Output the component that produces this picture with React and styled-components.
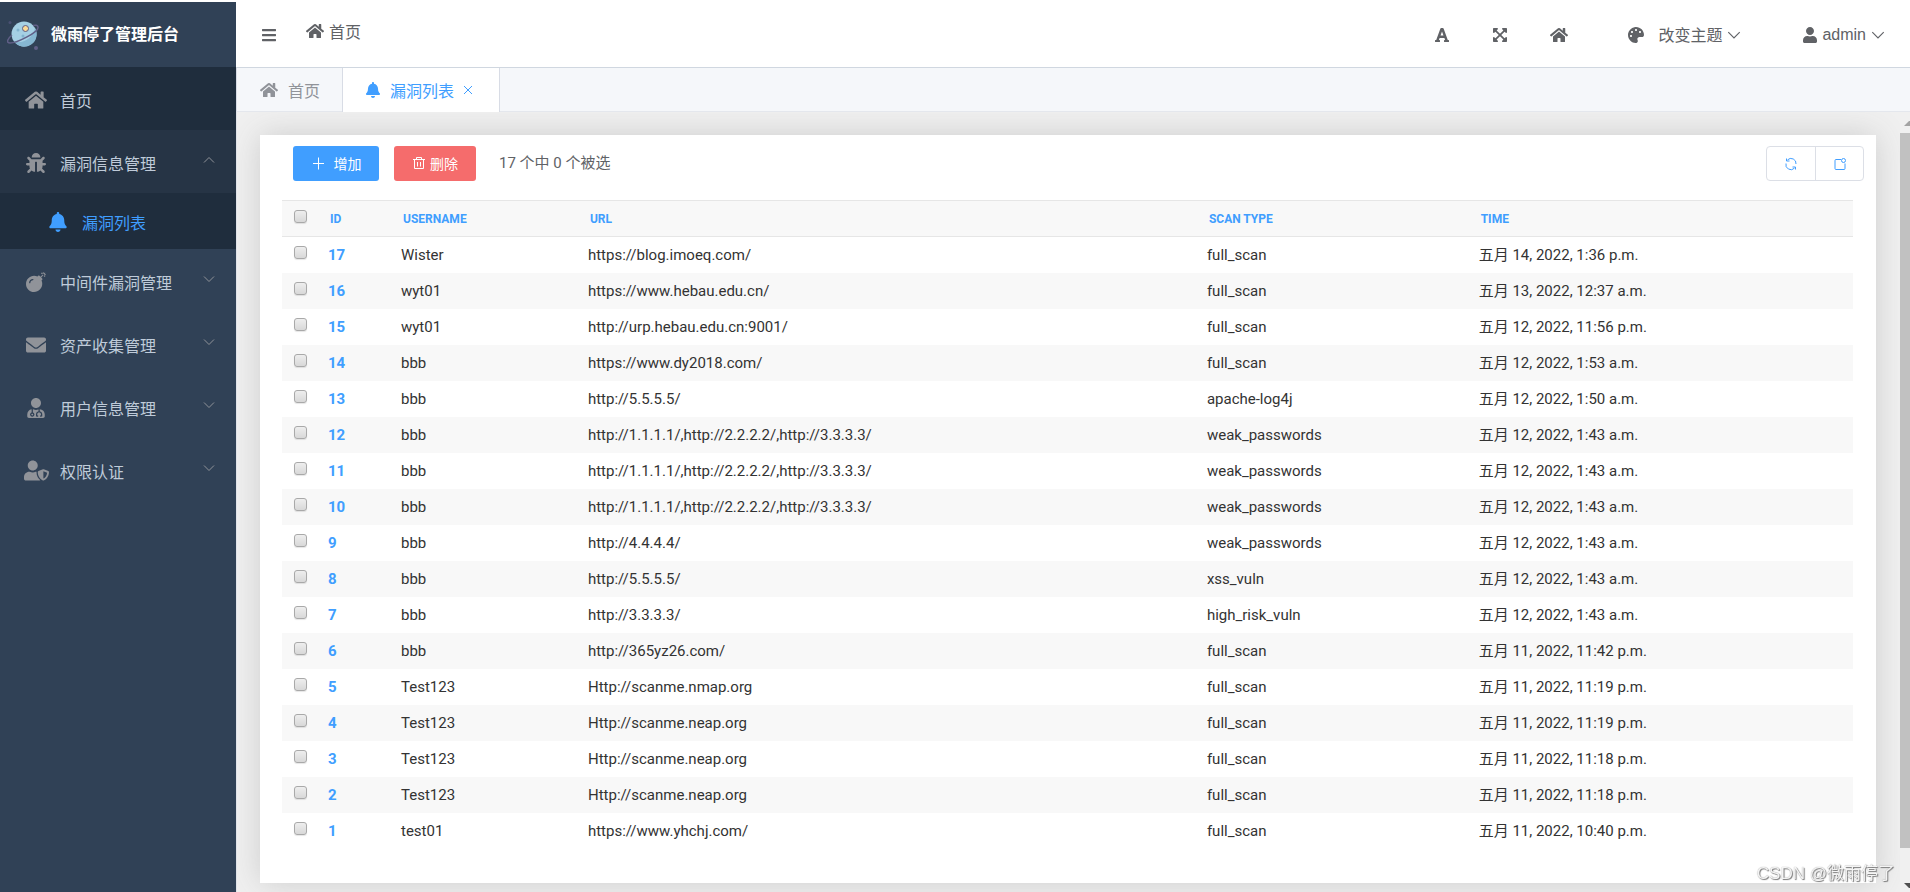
import React from 'react';
import styled, { createGlobalStyle, css } from 'styled-components';
import {
  FaBars,
  FaBell,
  FaBomb,
  FaBug,
  FaEnvelope,
  FaExpandArrowsAlt,
  FaFont,
  FaHome,
  FaPalette,
  FaUser,
  FaUserMd,
  FaUserShield,
} from 'react-icons/fa';

const GlobalStyle = createGlobalStyle`
  * {
    box-sizing: border-box;
  }
  body {
    margin: 0;
    background: #fff;
    color: #606266;
    font-family: 'Liberation Sans', 'Noto Sans CJK SC', sans-serif;
    font-size: 16px;
  }
  button {
    font-family: inherit;
    cursor: pointer;
  }
  a {
    color: inherit;
    text-decoration: none;
  }
`;

// layout
const Page = styled.div`
  display: flex;
  height: 100vh;
  padding-top: 2px;
  overflow: hidden;
`;

const Sidebar = styled.aside`
  flex: 0 0 236px;
  background: #304156;
`;

const Main = styled.div`
  flex: 1;
  min-width: 0;
  display: flex;
  flex-direction: column;
`;

// sidebar
const Brand = styled.a`
  display: flex;
  align-items: center;
  gap: 10px;
  height: 65px;
  padding: 0 0 3px 7px;
  color: #fff;
  font-weight: bold;
`;

const MenuItem = styled.a`
  display: flex;
  align-items: center;
  height: 63px;
  padding: 2px 20px 0 20px;
  color: #bfcbd9;
  background: ${(props) => props.$bg || 'transparent'};
`;

const SubItem = styled(MenuItem)`
  height: 56px;
  padding-left: 46px;
  color: #409eff;
`;

const MenuIcon = styled.span`
  display: flex;
  justify-content: center;
  width: ${(props) => (props.$sub ? '24px' : '32px')};
  margin-right: ${(props) => (props.$sub ? '12px' : '8px')};
  color: ${(props) => (props.$sub ? '#409eff' : '#909399')};
  font-size: 20px;
`;

const MenuArrow = styled.span`
  display: flex;
  margin: 0 0 6px auto;
  color: #909399;
`;

// top bar
const TopBar = styled.header`
  display: flex;
  align-items: center;
  height: 66px;
  padding: 0 24px 0 25px;
  border-bottom: 1px solid #d0d7e0;
  background: #fff;
`;

const IconButton = styled.button`
  display: flex;
  align-items: center;
  padding: 0;
  border: 0;
  background: none;
  color: #606266;
  font-size: 16px;
`;

const Crumb = styled.a`
  display: flex;
  align-items: center;
  gap: 5px;
  margin: 0 auto 7px 29px;
`;

const Tools = styled.div`
  display: flex;
  align-items: center;
  gap: 42px;
  margin-right: 60px;
`;

const Menus = styled.div`
  display: flex;
  gap: 60px;
`;

const DropButton = styled(IconButton)`
  gap: 4px;
`;

const ThemeLabel = styled.span`
  margin-left: 10px;
  padding-bottom: 2px;
`;

// tabs
const TabBar = styled.nav`
  display: flex;
  height: 44px;
  border-bottom: 1px solid #e4e7ed;
  border-left: 1px solid #d8dce5;
  background: #f5f7fa;
`;

const Tab = styled.a`
  display: flex;
  align-items: center;
  height: 44px;
  gap: 10px;
  padding: 0 22px 0 23px;
  color: #909399;
  border-right: 1px solid #d8dce5;
  ${(props) =>
    props.$active &&
    css`
      gap: 9px;
      color: #409eff;
      background: #fff;
      padding: 0 26px 0 22px;
    `}
`;

const TabClose = styled.span`
  display: flex;
`;

// content
const Content = styled.main`
  flex: 1;
  min-height: 0;
  display: flex;
  background: #f0f0f0;
  border-left: 1px solid #dfe2e8;
`;

const Scroller = styled.div`
  flex: 1;
  min-width: 0;
  padding: 23px 24px 9px 23px;
  overflow: hidden;
`;

const Card = styled.section`
  background: #fff;
  padding: 11px 12px 34px 22px;
  box-shadow: 0 0 30px #ccc;
  font-family: Roboto, 'Noto Sans CJK SC', sans-serif;
`;

const Toolbar = styled.div`
  display: flex;
  align-items: center;
  padding-left: 11px;
  margin-bottom: 19px;
`;

const ActionButton = styled.button`
  display: flex;
  align-items: center;
  justify-content: center;
  gap: ${(props) => props.$gap};
  width: ${(props) => props.$width};
  height: 35px;
  margin-right: 15px;
  padding: 0 0 2px;
  border: 0;
  border-radius: 3px;
  background: ${(props) => props.$bg};
  color: #fff;
  font-size: 14px;
`;

const Counter = styled.span`
  margin-left: 8px;
  padding-bottom: 4px;
  font-size: 15px;
`;

const ButtonGroup = styled.div`
  display: flex;
  margin-left: auto;
  border: 1px solid #dcdfe6;
  border-radius: 4px;
`;

const GroupButton = styled(IconButton)`
  justify-content: center;
  width: 48px;
  height: 33px;
  color: #409eff;
  & + & {
    border-left: 1px solid #dcdfe6;
  }
`;

const TableWrap = styled.div`
  padding-right: 11px;
`;

const Table = styled.table`
  width: 100%;
  table-layout: fixed;
  border-collapse: separate;
  border-spacing: 0;
`;

const Col = styled.col`
  width: ${(props) => props.$w};
`;

const Th = styled.th`
  height: 37px;
  padding: 0 10px;
  text-align: left;
  font-size: 12px;
  font-weight: bold;
  color: #409eff;
  background: #f8f8f8;
  border-top: 1px solid #e6e6e6;
  border-bottom: 1px solid #e6e6e6;
`;

const Td = styled.td`
  height: 36px;
  padding: 0 8px;
  font-size: 15px;
  line-height: 20px;
  color: #333;
  white-space: nowrap;
`;

const Row = styled.tr`
  &:nth-child(even) {
    background: #f8f8f8;
  }
`;

const IdLink = styled.a`
  color: #409eff;
  font-weight: bold;
`;

const Check = styled.input`
  appearance: none;
  display: block;
  width: 13px;
  height: 13px;
  margin: 0 0 5px 4px;
  border: 1px solid #a9a9a9;
  border-radius: 3px;
  background: linear-gradient(#eee, #d8d8d8);
  box-shadow: 0 1px 1px rgba(0, 0, 0, 0.1);
`;

const HeadCheck = styled(Check)`
  margin-left: 2px;
`;

// scrollbar
const ScrollTrack = styled.div`
  display: flex;
  flex-direction: column;
  justify-content: space-between;
  align-items: flex-end;
  width: 10px;
  padding: 9px 0 4px;
`;

const ScrollThumb = styled.div`
  flex: 1;
  width: 10px;
  margin: 7px 0 35px;
  background: #c1c1c1;
`;

const Watermark = styled.div`
  position: fixed;
  right: 15px;
  bottom: 6px;
  font-family: 'Liberation Sans', 'Noto Sans CJK SC', sans-serif;
  font-size: 17px;
  line-height: 24px;
  color: rgba(255, 255, 255, 0.9);
  text-shadow: 1px 1px 1px #777, 0 0 1px #888;
`;

const Chevron = ({ up, size = 14 }) => (
  <svg width={size} height={size} viewBox="0 0 14 14" fill="none" stroke="currentColor">
    <path d={up ? 'M2 9.5 7 4.5l5 5' : 'M2 4.5l5 5 5-5'} />
  </svg>
);

const PlanetLogo = () => (
  <svg width="34" height="38" viewBox="0 -6 34 38" fill="none">
    <circle cx="17" cy="14" r="12.5" fill="#a5d0e4" />
    <path d="M28 8a12.500 12.500 0 0 1-21 13.500c8 3 19-3 21-13.500z" fill="#86b7d2" />
    <circle cx="18.500" cy="8.500" r="3" fill="#fbd995" stroke="#5d5b83" />
    <circle cx="11" cy="10" r="1.500" fill="#80b3cf" />
    <circle cx="16" cy="16" r="1.500" fill="#80b3cf" />
    <path
      d="M5 15c-5 4-6 8-2 8 7 0 29-11 28-16-.4-2-2.500-2-5-1.500"
      stroke="#605f87"
      strokeWidth="1.500"
    />
    <circle cx="3" cy="2.500" r="1.500" fill="#4a5073" />
    <circle cx="29" cy="28" r="2" fill="#605f87" />
  </svg>
);

const PlusIcon = () => (
  <svg width="14" height="14" viewBox="0 0 14 14" stroke="#fff">
    <path d="M7.500 1.500v12M2 7.500h11" />
  </svg>
);

const TrashIcon = () => (
  <svg width="14" height="14" viewBox="0 0 14 14" fill="none" stroke="#fff">
    <path d="M1 3.500h12M4.500 3V1.500h5V3M2.500 4v8.500h9V4M5.500 6v4.500M8.500 6v4.500" />
  </svg>
);

const RefreshIcon = () => (
  <svg width="14" height="14" viewBox="0 0 14 14" fill="none" stroke="currentColor">
    <path d="M3.500 2.900a5 5 0 0 1 8.500 4.100M2 6.500a5 5 0 0 0 8.500 4.600M2.500 1.500v2.500h3M11.500 12.500v-2.500h-3" />
  </svg>
);

const ShareIcon = () => (
  <svg width="14" height="14" viewBox="0 0 14 14" fill="none" stroke="currentColor">
    <path d="M8 2.500H3a1 1 0 0 0-1 1v8a1 1 0 0 0 1 1h8a1 1 0 0 0 1-1V6.500" />
    <circle cx="10.500" cy="3.500" r="2" />
  </svg>
);

const CloseIcon = () => (
  <svg width="10" height="10" viewBox="0 0 10 10" stroke="currentColor">
    <path d="M1 1l8 8M9 1l-8 8" />
  </svg>
);

const scans = [
  [17, 'Wister', 'https://blog.imoeq.com/', 'full_scan', '五月 14, 2022, 1:36 p.m.'],
  [16, 'wyt01', 'https://www.hebau.edu.cn/', 'full_scan', '五月 13, 2022, 12:37 a.m.'],
  [15, 'wyt01', 'http://urp.hebau.edu.cn:9001/', 'full_scan', '五月 12, 2022, 11:56 p.m.'],
  [14, 'bbb', 'https://www.dy2018.com/', 'full_scan', '五月 12, 2022, 1:53 a.m.'],
  [13, 'bbb', 'http://5.5.5.5/', 'apache-log4j', '五月 12, 2022, 1:50 a.m.'],
  [12, 'bbb', 'http://1.1.1.1/,http://2.2.2.2/,http://3.3.3.3/', 'weak_passwords', '五月 12, 2022, 1:43 a.m.'],
  [11, 'bbb', 'http://1.1.1.1/,http://2.2.2.2/,http://3.3.3.3/', 'weak_passwords', '五月 12, 2022, 1:43 a.m.'],
  [10, 'bbb', 'http://1.1.1.1/,http://2.2.2.2/,http://3.3.3.3/', 'weak_passwords', '五月 12, 2022, 1:43 a.m.'],
  [9, 'bbb', 'http://4.4.4.4/', 'weak_passwords', '五月 12, 2022, 1:43 a.m.'],
  [8, 'bbb', 'http://5.5.5.5/', 'xss_vuln', '五月 12, 2022, 1:43 a.m.'],
  [7, 'bbb', 'http://3.3.3.3/', 'high_risk_vuln', '五月 12, 2022, 1:43 a.m.'],
  [6, 'bbb', 'http://365yz26.com/', 'full_scan', '五月 11, 2022, 11:42 p.m.'],
  [5, 'Test123', 'Http://scanme.nmap.org', 'full_scan', '五月 11, 2022, 11:19 p.m.'],
  [4, 'Test123', 'Http://scanme.neap.org', 'full_scan', '五月 11, 2022, 11:19 p.m.'],
  [3, 'Test123', 'Http://scanme.neap.org', 'full_scan', '五月 11, 2022, 11:18 p.m.'],
  [2, 'Test123', 'Http://scanme.neap.org', 'full_scan', '五月 11, 2022, 11:18 p.m.'],
  [1, 'test01', 'https://www.yhchj.com/', 'full_scan', '五月 11, 2022, 10:40 p.m.'],
];

const closedMenus = [
  { label: '中间件漏洞管理', icon: <FaBomb /> },
  { label: '资产收集管理', icon: <FaEnvelope /> },
  { label: '用户信息管理', icon: <FaUserMd /> },
  { label: '权限认证', icon: <FaUserShield size={25} /> },
];

const SideMenu = () => (
  <Sidebar>
    <Brand href="#">
      <PlanetLogo />
      微雨停了管理后台
    </Brand>
    <MenuItem href="#" $bg="#1f2d3d">
      <MenuIcon>
        <FaHome size={22} />
      </MenuIcon>
      首页
    </MenuItem>
    <MenuItem href="#" $bg="#263445">
      <MenuIcon>
        <FaBug />
      </MenuIcon>
      漏洞信息管理
      <MenuArrow>
        <Chevron up />
      </MenuArrow>
    </MenuItem>
    <SubItem href="#" $bg="#1f2d3d">
      <MenuIcon $sub>
        <FaBell />
      </MenuIcon>
      漏洞列表
    </SubItem>
    {closedMenus.map((item) => (
      <MenuItem href="#" key={item.label}>
        <MenuIcon>{item.icon}</MenuIcon>
        {item.label}
        <MenuArrow>
          <Chevron />
        </MenuArrow>
      </MenuItem>
    ))}
  </Sidebar>
);

const Header = () => (
  <TopBar>
    <IconButton aria-label="menu">
      <FaBars />
    </IconButton>
    <Crumb href="#">
      <FaHome size={18} />
      首页
    </Crumb>
    <Tools>
      <IconButton aria-label="font size">
        <FaFont />
      </IconButton>
      <IconButton aria-label="fullscreen">
        <FaExpandArrowsAlt />
      </IconButton>
      <IconButton aria-label="home">
        <FaHome size={18} />
      </IconButton>
    </Tools>
    <Menus>
      <DropButton>
        <FaPalette />
        <ThemeLabel>改变主题</ThemeLabel>
        <Chevron size={16} />
      </DropButton>
      <DropButton>
        <FaUser />
        admin
        <Chevron size={16} />
      </DropButton>
    </Menus>
  </TopBar>
);

const ScanTable = () => (
  <Table>
    <colgroup>
      <Col $w="38px" />
      <Col $w="73px" />
      <Col $w="11.9%" />
      <Col $w="39.4%" />
      <Col $w="17.3%" />
      <Col />
    </colgroup>
    <thead>
      <tr>
        <Th>
          <HeadCheck type="checkbox" aria-label="select all" />
        </Th>
        <Th>ID</Th>
        <Th>USERNAME</Th>
        <Th>URL</Th>
        <Th>SCAN TYPE</Th>
        <Th>TIME</Th>
      </tr>
    </thead>
    <tbody>
      {scans.map(([id, user, url, type, time]) => (
        <Row key={id}>
          <Td>
            <Check type="checkbox" aria-label={`select ${id}`} />
          </Td>
          <Td>
            <IdLink href="#">{id}</IdLink>
          </Td>
          <Td>{user}</Td>
          <Td>{url}</Td>
          <Td>{type}</Td>
          <Td>{time}</Td>
        </Row>
      ))}
    </tbody>
  </Table>
);

const App = () => {
  return (
    <>
      <GlobalStyle />
      <Page>
        <SideMenu />
        <Main>
          <Header />
          <TabBar>
            <Tab href="#">
              <FaHome size={18} />
              首页
            </Tab>
            <Tab href="#" $active>
              <FaBell size={16} />
              漏洞列表
              <TabClose>
                <CloseIcon />
              </TabClose>
            </Tab>
          </TabBar>
          <Content>
            <Scroller>
              <Card>
                <Toolbar>
                  <ActionButton $bg="#409eff" $width="86px" $gap="9px">
                    <PlusIcon />
                    增加
                  </ActionButton>
                  <ActionButton $bg="#f56c6c" $width="82px" $gap="4px">
                    <TrashIcon />
                    删除
                  </ActionButton>
                  <Counter>17 个中 0 个被选</Counter>
                  <ButtonGroup>
                    <GroupButton aria-label="refresh">
                      <RefreshIcon />
                    </GroupButton>
                    <GroupButton aria-label="open in new tab">
                      <ShareIcon />
                    </GroupButton>
                  </ButtonGroup>
                </Toolbar>
                <TableWrap>
                  <ScanTable />
                </TableWrap>
              </Card>
            </Scroller>
            <ScrollTrack>
              <svg width="6" height="5" viewBox="0 0 6 5">
                <path d="M0 5 5 0h1v5z" fill="#a3a3a3" />
              </svg>
              <ScrollThumb />
              <svg width="6" height="5" viewBox="0 0 6 5">
                <path d="M0 0h6v5H5z" fill="#505050" />
              </svg>
            </ScrollTrack>
          </Content>
        </Main>
      </Page>
      <Watermark>CSDN @微雨停了</Watermark>
    </>
  );
};

export default App;
